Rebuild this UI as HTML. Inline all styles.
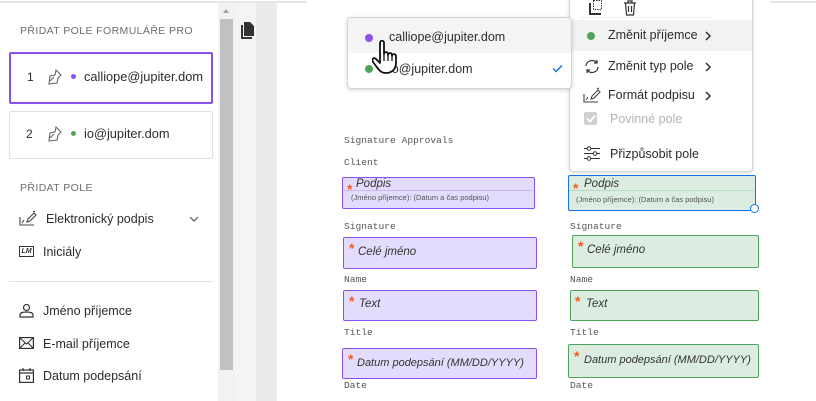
<!DOCTYPE html>
<html><head><meta charset="utf-8"><style>
*{margin:0;padding:0;box-sizing:border-box}
body{width:816px;height:401px;overflow:hidden;background:#fff;font-family:"Liberation Sans",sans-serif;position:relative;color:#2c2c2c}
.a{position:absolute}
.t{font-size:12.5px;color:#2c2c2c;white-space:nowrap}
.h{font-size:10.5px;color:#6e6e6e;letter-spacing:.4px;white-space:nowrap}
.m{font-family:"Liberation Mono",monospace;font-size:9.6px;color:#555;white-space:nowrap}
.fp{background:#e4dcfc;border:1.5px solid #8a50f0;border-radius:2px}
.fg{background:#dcece0;border:1.5px solid #4fa45b;border-radius:2px}
.ft{font-style:italic;font-size:11.5px;color:#333;white-space:nowrap}
.st{color:#f25c1e;font-size:14px;font-weight:bold}
.dot{width:7px;height:7px;border-radius:50%}
svg{position:absolute}
</style></head><body>
<div class="a" style="left:0;top:1px;width:307px;height:2px;background:#e6e6e6"></div>
<div class="a" style="left:770px;top:1px;width:46px;height:2px;background:#e6e6e6"></div>
<div class="a" style="left:218px;top:3px;width:17px;height:398px;background:#f2f2f2"></div>
<div class="a" style="left:220px;top:19px;width:13px;height:351px;background:#c1c1c1"></div>
<div class="a" style="left:223px;top:9px;width:0;height:0;border-left:3.5px solid transparent;border-right:3.5px solid transparent;border-bottom:4px solid #a3a3a3"></div>
<div class="a" style="left:235px;top:3px;width:21px;height:398px;background:#f4f4f4"></div>
<div class="a" style="left:256px;top:3px;width:21px;height:398px;background:#ebebeb"></div>
<svg style="left:241px;top:22px" width="14" height="17" viewBox="0 0 14 17"><path d="M0 3h2v12h9v2H0z" fill="#333"/><path d="M3 0h6l4 4v10H3z" fill="#333"/></svg>

<div class="a h" style="left:20px;top:25px">PŘIDAT POLE FORMULÁŘE PRO</div>
<div class="a" style="left:9px;top:52px;width:204px;height:52px;border:2px solid #8a50f0;border-radius:2px"></div>
<div class="a t" style="left:27px;top:70px;font-size:12px">1</div>
<svg style="left:46px;top:69px" width="16" height="16" viewBox="0 0 16 16"><path d="M10 1l5 5-3 3-1 5-8 1 1-8 5-1z M4 12l4-4" fill="none" stroke="#666" stroke-width="1.1"/></svg>
<div class="a dot" style="left:71px;top:74px;width:5px;height:5px;background:#8a50f0"></div>
<div class="a t" style="left:84px;top:69px;font-size:12.8px">calliope@jupiter.dom</div>
<div class="a" style="left:9px;top:111px;width:204px;height:48px;border:1px solid #e1e1e1;border-radius:2px"></div>
<div class="a t" style="left:26px;top:127px;font-size:12px">2</div>
<svg style="left:46px;top:126px" width="16" height="16" viewBox="0 0 16 16"><path d="M10 1l5 5-3 3-1 5-8 1 1-8 5-1z M4 12l4-4" fill="none" stroke="#666" stroke-width="1.1"/></svg>
<div class="a dot" style="left:71px;top:131px;width:5px;height:5px;background:#4fa45b"></div>
<div class="a t" style="left:84px;top:126px;font-size:12.8px">io@jupiter.dom</div>
<div class="a h" style="left:20px;top:182px">PŘIDAT POLE</div>
<svg style="left:19px;top:210px" width="18" height="16" viewBox="0 0 18 16"><path d="M1 7v8h14M3 13l2-3M9 9l6-6 2 2-6 6-3 1z M14 2l2-1" fill="none" stroke="#444" stroke-width="1.1"/></svg>
<div class="a t" style="left:46px;top:212px">Elektronický podpis</div>
<svg style="left:189px;top:216px" width="10" height="6" viewBox="0 0 10 6"><path d="M1 1l4 4 4-4" fill="none" stroke="#555" stroke-width="1.2"/></svg>
<div class="a" style="left:19px;top:246px;width:15px;height:11px;border:1px solid #333;font-size:7px;font-style:italic;font-weight:bold;line-height:9px;text-align:center;color:#333">LM</div>
<div class="a t" style="left:43px;top:245px">Iniciály</div>
<div class="a" style="left:9px;top:281px;width:204px;height:1px;background:#e1e1e1"></div>
<svg style="left:19px;top:303px" width="15" height="15" viewBox="0 0 15 15"><circle cx="7.5" cy="4.5" r="3" fill="none" stroke="#333" stroke-width="1.2"/><path d="M1 14v-2c0-2 2-3 6.5-3s6.5 1 6.5 3v2z" fill="none" stroke="#333" stroke-width="1.2"/></svg>
<div class="a t" style="left:43px;top:304px">Jméno příjemce</div>
<svg style="left:19px;top:337px" width="15" height="12" viewBox="0 0 15 12"><rect x=".6" y=".6" width="13.8" height="10.8" fill="none" stroke="#333" stroke-width="1.2"/><path d="M1 1l6.5 6 6.5-6M1 11l5-5M14 11l-5-5" fill="none" stroke="#333" stroke-width="1.1"/></svg>
<div class="a t" style="left:43px;top:337px">E-mail příjemce</div>
<svg style="left:19px;top:368px" width="15" height="15" viewBox="0 0 15 15"><rect x=".6" y="2" width="13.8" height="12.4" fill="none" stroke="#333" stroke-width="1.2"/><path d="M1 5h13M4 0v3M11 0v3" stroke="#333" stroke-width="1.2"/><rect x="7.5" y="8" width="3" height="3" fill="none" stroke="#333"/></svg>
<div class="a t" style="left:43px;top:369px">Datum podepsání</div>

<div class="a m" style="left:344px;top:135px">Signature Approvals</div>
<div class="a m" style="left:344px;top:157px">Client</div>
<div class="a m" style="left:344px;top:221px">Signature</div>
<div class="a m" style="left:344px;top:274px">Name</div>
<div class="a m" style="left:344px;top:327px">Title</div>
<div class="a m" style="left:344px;top:380px">Date</div>
<div class="a m" style="left:570px;top:221px">Signature</div>
<div class="a m" style="left:570px;top:274px">Name</div>
<div class="a m" style="left:570px;top:327px">Title</div>
<div class="a m" style="left:570px;top:380px">Date</div>

<div class="a fp" style="left:342px;top:177px;width:193px;height:32px"><div class="a" style="left:0;top:12px;width:190px;height:1px;background:#c9b8f2"></div><span class="a st" style="left:4px;top:3px">*</span><span class="a ft" style="left:13px;top:0">Podpis</span><span class="a" style="left:8px;top:15px;font-size:7.5px;color:#555;white-space:nowrap">(Jméno příjemce): (Datum a čas podpisu)</span></div>
<div class="a fp" style="left:343px;top:237px;width:194px;height:32px"><span class="a st" style="left:5px;top:2px">*</span><span class="a ft" style="left:14px;top:8px">Celé jméno</span></div>
<div class="a fp" style="left:343px;top:290px;width:194px;height:31px"><span class="a st" style="left:5px;top:2px">*</span><span class="a ft" style="left:15px;top:7px">Text</span></div>
<div class="a fp" style="left:342px;top:348px;width:195px;height:31px"><span class="a st" style="left:5px;top:2px">*</span><span class="a ft" style="left:14px;top:8px;font-size:11px">Datum podepsání (MM/DD/YYYY)</span></div>
<div class="a fg" style="left:568px;top:175px;width:188px;height:36px;border-color:#1473e6"><div class="a" style="left:0;top:14px;width:185px;height:1px;background:#b8dcc0"></div><span class="a st" style="left:4px;top:4px">*</span><span class="a ft" style="left:15px;top:2px">Podpis</span><span class="a" style="left:7px;top:19px;font-size:7.5px;color:#555;white-space:nowrap">(Jméno příjemce): (Datum a čas podpisu)</span></div>
<div class="a" style="left:750px;top:204px;width:9px;height:9px;border-radius:50%;border:1.5px solid #1473e6;background:#fff"></div>
<div class="a fg" style="left:572px;top:235px;width:187px;height:33px"><span class="a st" style="left:5px;top:2px">*</span><span class="a ft" style="left:14px;top:8px">Celé jméno</span></div>
<div class="a fg" style="left:570px;top:290px;width:189px;height:31px"><span class="a st" style="left:4px;top:2px">*</span><span class="a ft" style="left:15px;top:7px">Text</span></div>
<div class="a fg" style="left:568px;top:344px;width:191px;height:34px"><span class="a st" style="left:5px;top:3px">*</span><span class="a ft" style="left:15px;top:9px;font-size:11px">Datum podepsání (MM/DD/YYYY)</span></div>

<div class="a" style="left:569px;top:-4px;width:184px;height:176px;background:#fff;border:1px solid #d5d5d5;border-radius:4px;box-shadow:0 1px 4px rgba(0,0,0,.15)"></div>
<svg style="left:589px;top:0" width="14" height="15" viewBox="0 0 14 15"><path d="M1 3v11h11" fill="none" stroke="#333" stroke-width="2"/><rect x="4.5" y=".5" width="8" height="9" fill="none" stroke="#333" stroke-dasharray="1.5 1"/></svg>
<svg style="left:623px;top:0" width="14" height="16" viewBox="0 0 14 16"><path d="M1 3h12M5 3V1h4v2M2.5 3l1 12h7l1-12M5.5 6v6M8.5 6v6" fill="none" stroke="#333" stroke-width="1.2"/></svg>
<div class="a" style="left:580px;top:17px;width:132px;height:1px;background:#eee"></div>
<div class="a" style="left:570px;top:20px;width:182px;height:31px;background:#f2f2f2"></div>
<div class="a dot" style="left:587px;top:32px;width:8px;height:8px;background:#4fa45b"></div>
<div class="a t" style="left:608px;top:28px">Změnit příjemce</div>
<svg style="left:705px;top:31px" width="7" height="10" viewBox="0 0 7 10"><path d="M1 1l4 4-4 4" fill="none" stroke="#333" stroke-width="1.5"/></svg>
<svg style="left:584px;top:59px" width="16" height="15" viewBox="0 0 16 15"><path d="M2 7a6 5.5 0 0 1 11-3M14 8a6 5.5 0 0 1-11 3M13 1v3h-3M3 14v-3h3" fill="none" stroke="#333" stroke-width="1.2"/></svg>
<div class="a t" style="left:608px;top:59px">Změnit typ pole</div>
<svg style="left:705px;top:62px" width="7" height="10" viewBox="0 0 7 10"><path d="M1 1l4 4-4 4" fill="none" stroke="#333" stroke-width="1.5"/></svg>
<svg style="left:583px;top:87px" width="18" height="16" viewBox="0 0 18 16"><path d="M1 7v8h14M3 13l2-3M9 9l6-6 2 2-6 6-3 1z M14 2l2-1" fill="none" stroke="#444" stroke-width="1.1"/></svg>
<div class="a t" style="left:608px;top:88px">Formát podpisu</div>
<svg style="left:705px;top:91px" width="7" height="10" viewBox="0 0 7 10"><path d="M1 1l4 4-4 4" fill="none" stroke="#333" stroke-width="1.5"/></svg>
<div class="a" style="left:584px;top:112px;width:13px;height:13px;background:#d0d0d0;border-radius:2px"></div>
<svg style="left:586px;top:114px" width="10" height="9" viewBox="0 0 10 9"><path d="M1 4.5l3 3 5-6" fill="none" stroke="#fff" stroke-width="1.8"/></svg>
<div class="a t" style="left:610px;top:112px;color:#b3b3b3">Povinné pole</div>
<svg style="left:584px;top:146px" width="16" height="15" viewBox="0 0 16 15"><path d="M0 2.5h16M0 7.5h16M0 12.5h16" stroke="#333" stroke-width="1.1"/><circle cx="5" cy="2.5" r="1.8" fill="#fff" stroke="#333"/><circle cx="11" cy="7.5" r="1.8" fill="#fff" stroke="#333"/><circle cx="5" cy="12.5" r="1.8" fill="#fff" stroke="#333"/></svg>
<div class="a t" style="left:610px;top:147px">Přizpůsobit pole</div>

<div class="a" style="left:347px;top:17px;width:225px;height:72px;background:#fff;border:1px solid #d5d5d5;border-radius:4px;box-shadow:0 1px 4px rgba(0,0,0,.18);overflow:hidden"><div style="height:35px;background:#f4f4f4"></div></div>
<div class="a dot" style="left:365px;top:34px;width:8px;height:8px;background:#8a50f0"></div>
<div class="a t" style="left:389px;top:30px">calliope@jupiter.dom</div>
<div class="a dot" style="left:365px;top:65px;width:8px;height:8px;background:#4fa45b"></div>
<div class="a t" style="left:389px;top:62px">io@jupiter.dom</div>
<svg style="left:552px;top:64px" width="11" height="9" viewBox="0 0 11 9"><path d="M1 4.5l3 3 6-6" fill="none" stroke="#1473e6" stroke-width="1.5"/></svg>
<svg style="left:372px;top:38px" width="34" height="40" viewBox="0 0 34 40"><path d="M8 5c0-3 4-3 4 0v11c0-2.5 4-2.5 4 0v1c0-2.5 4-2.5 4 0v1c0-2.5 4-2.5 4 0v7c0 6-4 10-10 10c-5 0-7-3-10-7l-3-4c-2-3 1-5 3-3l4 4z" fill="#fff" stroke="#111" stroke-width="1.8" stroke-linejoin="round"/><path d="M12 16v7M16 17v6M20 18v5" stroke="#111" stroke-width="1.3"/></svg>
</body></html>
